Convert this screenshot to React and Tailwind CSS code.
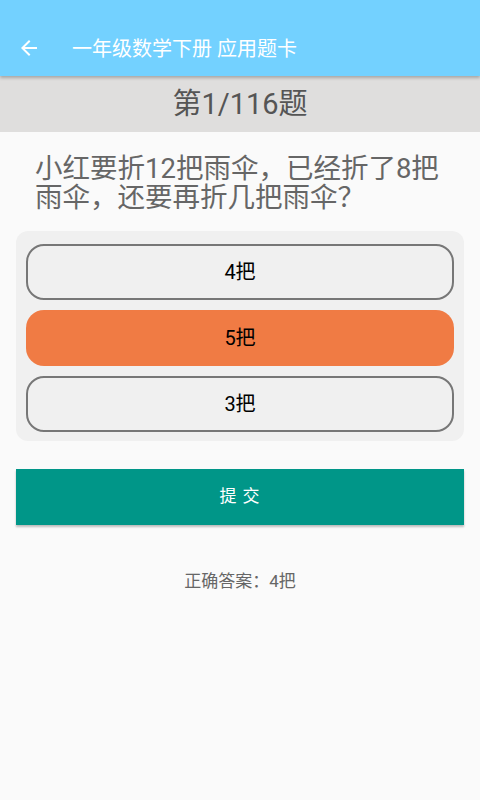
import { useState } from "react";

const options = ["4把", "5把", "3把"];

function App() {
  const [selected, setSelected] = useState(1);

  return (
    <div
      className="w-[480px] h-[800px] bg-[#fafafa] flex flex-col overflow-hidden"
      style={{ fontFamily: "Roboto, 'Noto Sans CJK SC', sans-serif" }}
    >
      {/* toolbar */}
      <div className="h-[76px] bg-[#73d1ff] flex items-end shadow-[0_2px_3px_rgba(0,0,0,0.25)] relative z-10">
        <div className="h-[56px] w-full flex items-center">
          <div className="w-[72px] flex items-center pl-[17px]">
            <svg width="24" height="24" viewBox="0 0 24 24" fill="#ffffff">
              <path d="M20 11H7.83l5.59-5.59L12 4l-8 8 8 8 1.41-1.41L7.83 13H20v-2z" />
            </svg>
          </div>
          <span className="text-white text-[20px] leading-none pt-[2px]">
            一年级数学下册 应用题卡
          </span>
        </div>
      </div>

      {/* question number */}
      <div className="h-[56px] bg-[#dfdedd] flex items-center justify-center">
        <span className="text-[29px] text-[#555555] leading-none">
          第1/116题
        </span>
      </div>

      {/* question */}
      <div className="pl-[35px] pr-[30px] pt-[22px] text-[27.5px] leading-[29px] text-[#666666]">
        小红要折12把雨伞，已经折了8把雨伞，还要再折几把雨伞？
      </div>

      {/* options */}
      <div className="mx-[16px] mt-[19px] bg-[#f0f0f0] rounded-[12px] px-[10px] pt-[13px] pb-[9px] flex flex-col gap-[10px]">
        {options.map((o, i) => (
          <button
            key={o}
            onClick={() => setSelected(i)}
            className={
              i === selected
                ? "h-[56px] rounded-[18px] bg-[#f07b44] text-black text-[20px] flex items-center justify-center"
                : "h-[56px] rounded-[18px] bg-[#f0f0f0] border-2 border-[#777777] text-black text-[20px] flex items-center justify-center"
            }
          >
            {o}
          </button>
        ))}
      </div>

      {/* submit */}
      <button className="mx-[16px] mt-[28px] h-[56px] bg-[#009688] text-white text-[17px] tracking-[1px] shadow-[0_2px_2px_rgba(0,0,0,0.25)] flex items-center justify-center">
        提 交
      </button>

      <div className="mt-[44px] text-center text-[17px] text-[#666666]">
        正确答案：4把
      </div>
    </div>
  );
}

export default App;
